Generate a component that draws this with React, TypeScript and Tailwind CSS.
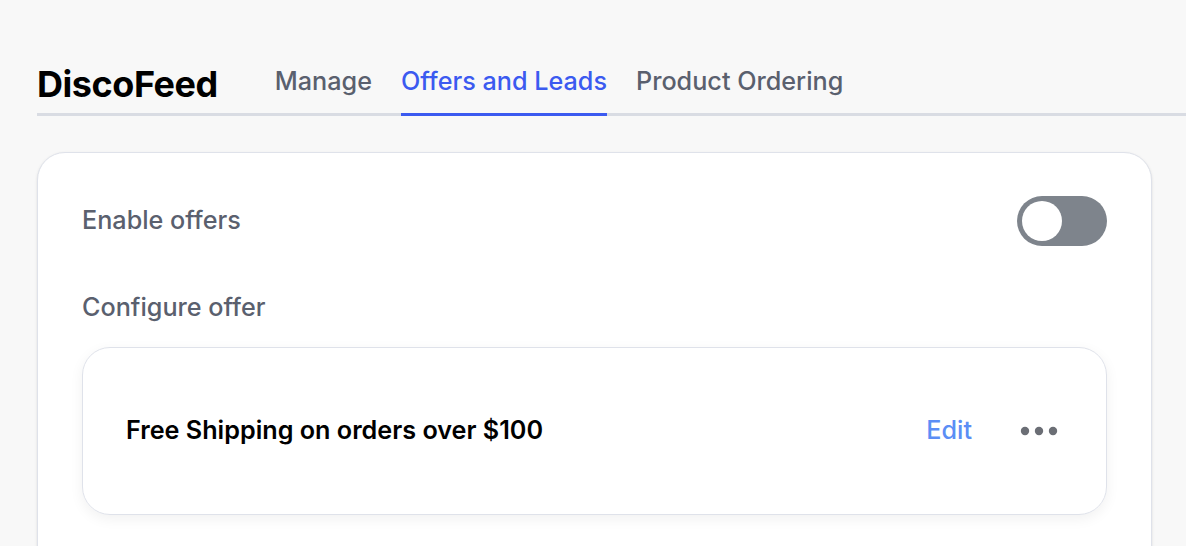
export default function App() {
  return (
    <div className="min-h-[546px] bg-[#f8f8f8] pl-[37px] pt-[63px] font-['Inter',sans-serif] overflow-hidden">
      <div className="flex items-end border-b-[3px] border-[#d9dce3]">
        <h1 className="text-[36px] font-bold text-black leading-none pb-[11px] mr-[57px] tracking-[-0.45px]">DiscoFeed</h1>
        <nav className="flex gap-[29px] text-[25.2px] font-medium">
          <a className="text-[#5a606e] pb-[12px] -mb-[3px] border-b-[3px] border-transparent">Manage</a>
          <a className="text-[#3b5af0] pb-[12px] -mb-[3px] border-b-[3px] border-[#3b5af0]">Offers and Leads</a>
          <a className="text-[#5a606e] pb-[12px] -mb-[3px] border-b-[3px] border-transparent">Product Ordering</a>
        </nav>
      </div>
      <div className="mt-[36px] w-[1115px] bg-white border border-[#dfe2ea] rounded-[28px] px-[44px] pt-[43px] pb-[40px] shadow-sm">
        <div className="flex items-center justify-between">
          <span className="text-[25.2px] font-medium text-[#5a606e]">Enable offers</span>
          <button className="w-[90px] h-[50px] rounded-full bg-[#7e848c] p-[5px] flex items-center">
            <span className="w-[40px] h-[40px] rounded-full bg-white" />
          </button>
        </div>
        <div className="mt-[43px] text-[25.2px] font-medium text-[#5a606e]">Configure offer</div>
        <div className="mt-[20px] h-[168px] border border-[#dfe2ea] rounded-[28px] shadow-[0_4px_14px_rgba(0,0,0,0.06)] flex items-center pl-[43px] pr-[48px]">
          <span className="flex-1 text-[25.2px] font-semibold text-black">Free Shipping on orders over $100</span>
          <a className="text-[25.2px] font-medium text-[#5b8ef5] mr-[48px]">Edit</a>
          <svg width="38" height="10" viewBox="0 0 38 10" fill="#6b6e75">
            <circle cx="5" cy="5" r="4.2" />
            <circle cx="19" cy="5" r="4.2" />
            <circle cx="33" cy="5" r="4.2" />
          </svg>
        </div>
        <div className="h-[40px]" />
      </div>
    </div>
  );
}
